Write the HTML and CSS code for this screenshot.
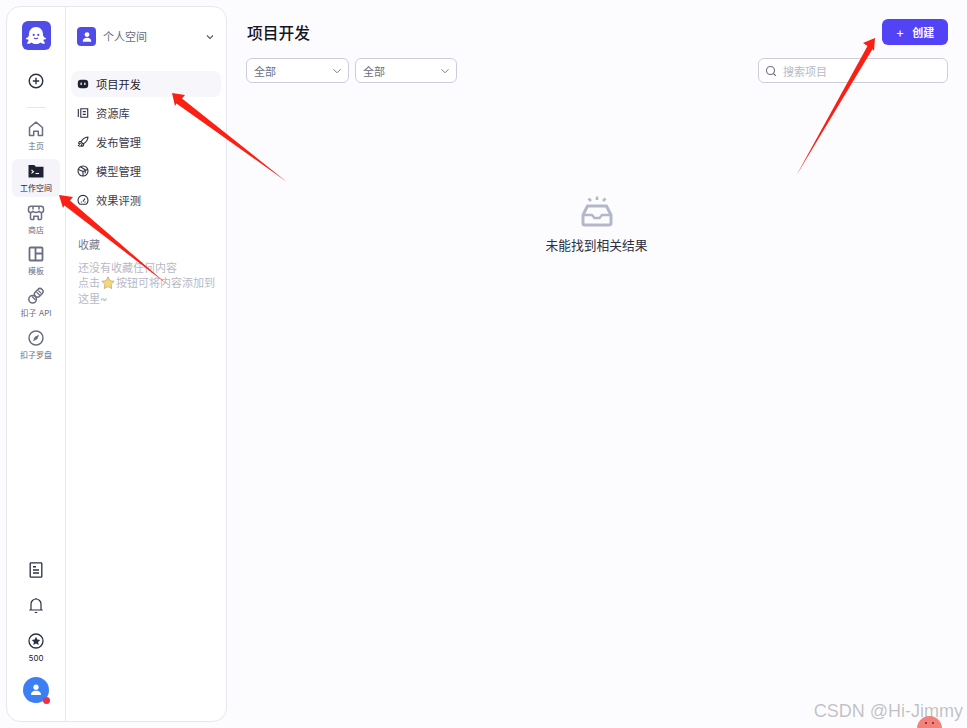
FILE: index.html
```html
<!DOCTYPE html>
<html lang="zh-CN">
<head>
    <meta charset="UTF-8">
    <meta name="viewport" content="width=device-width, initial-scale=1.0">
    <title>项目开发</title>
    <link rel="stylesheet" href="styles.css">
</head>
<body>
    <div class="app">
        <aside class="panel">
            <div class="rail">
                <div class="logo">
                    <svg width="22" height="20" viewBox="0 0 21 18" preserveAspectRatio="none"><path d="M10.500 1C6.300 1 3.800 4 3.800 7.800c0 1.300-.9 2.300-2.500 3-.6.300-.5 1 .2 1.100.8.100 1.400.2 2 .5-.1 1-.6 1.900-1.300 2.500-.5.400-.2 1.100.5 1.100 1.400 0 2.700-.4 3.600-1.200 1.100.9 2.600 1.500 4.200 1.500s3.100-.6 4.200-1.500c.9.800 2.200 1.200 3.600 1.200.7 0 1-.7.500-1.100-.7-.6-1.200-1.500-1.300-2.500.6-.3 1.200-.4 2-.5.700-.1.800-.8.200-1.100-1.600-.7-2.500-1.700-2.500-3C17.200 4 14.700 1 10.500 1z" fill="#fff"/><circle cx="8.300" cy="8" r="1" fill="#4f4ce8"/><circle cx="12.700" cy="8" r="1" fill="#4f4ce8"/><path d="M8.600 10.600c1 1 2.800 1 3.800 0" fill="none" stroke="#4f4ce8" stroke-width="1"/></svg>
                </div>
                <div class="rail-add">
                    <svg width="18" height="18" viewBox="0 0 18 18" fill="none" stroke="#2b2f42" stroke-width="1.400"><circle cx="9" cy="9" r="6.800"/><path d="M9 5.800v6.400M5.800 9h6.400"/></svg>
                </div>
                <div class="rail-divider"></div>
                <div class="rail-item">
                    <svg width="18" height="18" viewBox="0 0 18 18" fill="none" stroke="#6b6e82" stroke-width="1.500" stroke-linejoin="round"><path d="M2.500 7.500 9 2.200l6.500 5.300v8h-4.200v-4.200H6.700v4.200H2.500z"/></svg>
                    <span>主页</span>
                </div>
                <div class="rail-item rail-item-active">
                    <svg width="18" height="18" viewBox="0 0 18 18"><path d="M1.500 3h5.800l1.500 1.700h7.700v10.800h-15z" fill="#1f2233"/><path d="m4.500 8 2 1.700-2 1.700" fill="none" stroke="#fff" stroke-width="1.100"/><path d="M8.500 11.500h3.500" stroke="#fff" stroke-width="1.100"/></svg>
                    <span>工作空间</span>
                </div>
                <div class="rail-item">
                    <svg width="18" height="18" viewBox="0 0 18 18" fill="none" stroke="#6b6e82" stroke-width="1.500" stroke-linejoin="round"><path d="M4 2.200h10c1.500 0 2.500 1 2.500 2.500V6.500c0 1.200-1 2-2.100 2-1 0-1.700-.5-2.200-1.200-.7.800-1.800 1.200-3.200 1.200s-2.500-.4-3.200-1.200c-.5.700-1.200 1.200-2.200 1.200-1.100 0-2.100-.8-2.100-2V4.700c0-1.500 1-2.500 2.500-2.500z"/><path d="M3.500 9v5.500c0 .6.400 1 1 1h2.300v-3.300h4.400v3.300h2.300c.6 0 1-.4 1-1V9M6 2.500v3M12 2.500v3"/></svg>
                    <span>商店</span>
                </div>
                <div class="rail-item">
                    <svg width="18" height="18" viewBox="0 0 18 18" fill="none" stroke="#6b6e82" stroke-width="1.800"><rect x="2.500" y="2.500" width="13" height="13" rx="1"/><path d="M8.500 2.500v13M8.500 8.500h7"/></svg>
                    <span>模板</span>
                </div>
                <div class="rail-item">
                    <svg width="18" height="18" viewBox="0 0 18 18" fill="none" stroke="#6b6e82" stroke-width="1.500"><circle cx="5.600" cy="12.200" r="3.800"/><rect x="7" y="2.800" width="9.500" height="6" rx="3" transform="rotate(-45 11.750 5.800)"/><path d="m9.500 5 3.500 3.500M11.300 3.500l3.200 3.200M5 9.500l3.500 3.500" stroke-width="1.100"/></svg>
                    <span>扣子 API</span>
                </div>
                <div class="rail-item">
                    <svg width="18" height="18" viewBox="0 0 18 18" fill="none" stroke="#6b6e82" stroke-width="1.500"><circle cx="9" cy="9" r="7"/><path d="m12.200 5.800-4.400 2-2 4.400 4.400-2z" fill="#6b6e82" stroke="none"/></svg>
                    <span>扣子罗盘</span>
                </div>
                <div class="rail-bottom">
                    <svg width="18" height="18" viewBox="0 0 18 18" fill="none" stroke="#2b2f42" stroke-width="1.300"><rect x="3.200" y="1.800" width="11.600" height="14.400" rx=".8"/><path d="M6 5.800h3M6 9h6M6 12h6" stroke-width="1.400"/></svg>
                    <svg class="rail-bell" width="18" height="18" viewBox="0 0 18 18" fill="none" stroke="#2b2f42" stroke-width="1.200"><path d="M2.300 14h13.400M4 14V8a5 5 0 0 1 10 0v6M9 2v1M7.800 16.500h2.400"/></svg>
                    <svg class="rail-star" width="18" height="18" viewBox="0 0 18 18"><circle cx="9" cy="9" r="7" fill="none" stroke="#2b2f42" stroke-width="1.300"/><path d="m9 4.800 1.300 2.800 3 .4-2.200 2.100.6 3L9 11.600l-2.700 1.500.6-3L4.700 8l3-.4z" fill="#2b2f42"/></svg>
                    <span class="rail-points">500</span>
                    <div class="avatar">
                        <svg width="14" height="14" viewBox="0 0 14 14" fill="#fff"><circle cx="7" cy="4.200" r="2.600"/><path d="M2 12c0-3 2.200-4.200 5-4.200S12 9 12 12z"/></svg>
                        <span class="avatar-badge"></span>
                    </div>
                </div>
            </div>
            <nav class="nav">
                <div class="space">
                    <span class="space-icon">
                        <svg width="12" height="12" viewBox="0 0 14 14" fill="#fff"><circle cx="7" cy="4.200" r="2.800"/><path d="M2 12.500c0-3.200 2.200-4.500 5-4.500s5 1.300 5 4.500z"/></svg>
                    </span>
                    <span class="space-name">个人空间</span>
                    <svg class="space-caret" width="10" height="10" viewBox="0 0 10 10" fill="none" stroke="#55586a" stroke-width="1.100"><path d="m2 3.500 3 3 3-3"/></svg>
                </div>
                <ul class="menu">
                    <li class="menu-item menu-item-active">
                        <svg width="12" height="12" viewBox="0 0 12 12"><rect x=".8" y="1.800" width="10.400" height="8.400" rx="3.200" fill="#1f2233"/><rect x="3.500" y="4.500" width="1.300" height="2.600" rx=".6" fill="#fff"/><rect x="7.200" y="4.500" width="1.300" height="2.600" rx=".6" fill="#fff"/></svg>
                        <span>项目开发</span>
                    </li>
                    <li class="menu-item">
                        <svg width="12" height="12" viewBox="0 0 12 12" fill="none" stroke="#2b2f42" stroke-width="1.100"><path d="M1.300 2v8M3.800 1.800h6.900v8.400H3.800zM5.800 4.600h3M5.800 7.400h3"/></svg>
                        <span>资源库</span>
                    </li>
                    <li class="menu-item">
                        <svg width="12" height="12" viewBox="0 0 12 12" fill="none" stroke="#2b2f42" stroke-width="1.100" stroke-linejoin="round"><path d="M11 1C7.800 1.200 5.500 3 4 6l2 2c3-1.500 4.800-3.800 5-7zM4.300 5.300 2.500 5.500 1.500 7.300l2.300.2M6.700 7.700 6.500 9.500l-1.800 1-.2-2.300M2.800 8.300 1 10M3.800 9.500 2.500 11" /></svg>
                        <span>发布管理</span>
                    </li>
                    <li class="menu-item">
                        <svg width="12" height="12" viewBox="0 0 12 12" fill="none" stroke="#2b2f42" stroke-width="1.100" stroke-linejoin="round"><circle cx="6" cy="6" r="5"/><path d="M1.500 4.500 6 6.500l4.500-2M6 6.500V11M3.500 1.800 8.200 4.800v3.500"/></svg>
                        <span>模型管理</span>
                    </li>
                    <li class="menu-item">
                        <svg width="12" height="12" viewBox="0 0 12 12" fill="none" stroke="#2b2f42" stroke-width="1.100"><path d="M2.800 10.200a5 5 0 1 1 6.400 0z"/><path d="M6 7.500 8 4.500M3.800 8h1M7.500 8h1"/></svg>
                        <span>效果评测</span>
                    </li>
                </ul>
                <div class="saved">
                    <div class="saved-title">收藏</div>
                    <p class="saved-text"><span>还没有收藏任何内容</span><br><span>点击</span><svg class="saved-star" width="14" height="13" viewBox="0 0 14 13"><path d="m7 .8 1.900 3.900 4.300.6-3.100 3 .7 4.300L7 10.600l-3.800 2 .7-4.300-3.100-3 4.300-.6z" fill="#f5d77c" stroke="#b9a56a" stroke-width=".7"/></svg><span>按钮可将内容添加到</span><br><span>这里~</span></p>
                </div>
            </nav>
        </aside>
        <main class="main">
            <div class="main-head">
                <h1>项目开发</h1>
                <button class="create-btn"><span class="create-plus">+</span>创建</button>
            </div>
            <div class="toolbar">
                <div class="select select-first">
                    <span>全部</span>
                    <svg width="10" height="10" viewBox="0 0 10 10" fill="none" stroke="#7b7e90" stroke-width="1"><path d="m1.500 3.300 3.500 3.500 3.500-3.500"/></svg>
                </div>
                <div class="select">
                    <span>全部</span>
                    <svg width="10" height="10" viewBox="0 0 10 10" fill="none" stroke="#7b7e90" stroke-width="1"><path d="m1.500 3.300 3.500 3.500 3.500-3.500"/></svg>
                </div>
                <div class="search">
                    <svg width="12" height="12" viewBox="0 0 12 12" fill="none" stroke="#6b6e82" stroke-width="1.100"><circle cx="5.500" cy="5.500" r="4"/><path d="m8.500 8.500 2.300 2.300"/></svg>
                    <span>搜索项目</span>
                </div>
            </div>
            <div class="empty">
                <svg width="34" height="32" viewBox="0 0 34 32" fill="none" stroke="#b4b7c9"><path d="M3 20 7.500 11h19L31 20v8.500a1.500 1.500 0 0 1-1.500 1.500h-25A1.500 1.500 0 0 1 3 28.500z" stroke-width="3" stroke-linejoin="round"/><path d="M4 20h8l2.500 3h5L22 20h8" stroke-width="2.500"/><path d="M17 1.500v3.500M8.500 3.500l2.500 2.500M25.500 3.500 23 6" stroke-width="2.500"/></svg>
                <p>未能找到相关结果</p>
            </div>
        </main>
    </div>

    <!-- 标注箭头 -->
    <svg class="arrows" width="967" height="728" viewBox="0 0 967 728" fill="#fb1f14">
        <polygon points="172,93 185,95 182,98.500 287,182 176.500,103.500 175,106"/>
        <polygon points="59,195 73,197 70,200.500 168,285 64.500,205.500 63,208"/>
        <polygon points="875,38 863,43 867.500,46 796,176 872.500,49 874,51"/>
    </svg>

    <div class="blob"><i></i><i></i></div>
    <div class="watermark">CSDN @Hi-Jimmy</div>
</body>
</html>
```

FILE: styles.css
```css
* {
    box-sizing: border-box;
}
html, body {
    margin: 0;
    height: 728px;
    overflow: hidden;
}
body {
    position: relative;
    font-family: Inter, 'Noto Sans CJK SC', sans-serif;
    background-color: #fcfcff;
    color: #1f2233;
}
.app {
    display: flex;
    height: 728px;
    padding: 6px 0 6px 6px;
}
.panel {
    display: flex;
    width: 221px;
    height: 716px;
    background-color: #fff;
    border: 1px solid #e6e7f1;
    border-radius: 14px;
}
.rail {
    display: flex;
    flex-direction: column;
    align-items: center;
    width: 59px;
    padding: 14px 0 18px;
    border-right: 1px solid #e9eaf1;
}
.logo {
    display: flex;
    align-items: center;
    justify-content: center;
    width: 29px;
    height: 29px;
    background-color: #4f4ce8;
    border-radius: 6px;
}
.rail-add {
    height: 18px;
    margin-top: 22px;
}
.rail-divider {
    width: 19px;
    height: 1px;
    margin: 17px 0 9px;
    background-color: #e6e7ee;
}
.rail-item {
    display: flex;
    flex-direction: column;
    align-items: center;
    flex-shrink: 0;
    width: 48px;
    height: 38px;
    margin-bottom: 3.750px;
    padding-top: 3px;
    border-radius: 6px;
    font-size: 8px;
    line-height: 10px;
    color: #6b6e82;
}
.rail-item span {
    margin-top: 3px;
}
.rail-item-active {
    background-color: #f4f4fa;
    color: #1f2233;
}
.rail-bottom {
    display: flex;
    flex-direction: column;
    align-items: center;
    margin-top: auto;
}
.rail-bell {
    margin-top: 17px;
}
.rail-star {
    margin-top: 18px;
}
.rail-points {
    margin-top: 3px;
    font-size: 8px;
    line-height: 10px;
}
.avatar {
    position: relative;
    display: flex;
    align-items: center;
    justify-content: center;
    width: 26px;
    height: 26px;
    margin-top: 14px;
    background-color: #3c7ff5;
    border-radius: 50%;
}
.avatar-badge {
    position: absolute;
    right: -1px;
    bottom: -1px;
    width: 7px;
    height: 7px;
    background-color: #ee2f45;
    border-radius: 50%;
}
.nav {
    flex: 1;
    padding: 0 5px;
}
.space {
    display: flex;
    align-items: center;
    height: 19px;
    margin: 20px 0 25px 6px;
}
.space-icon {
    display: flex;
    align-items: center;
    justify-content: center;
    width: 19px;
    height: 19px;
    background-color: #4f4ce8;
    border-radius: 4px;
}
.space-name {
    margin: 0 0 2px 7px;
    font-size: 11px;
    color: #666a7c;
}
.space-caret {
    margin-left: auto;
    margin-right: 6px;
}
.menu {
    display: flex;
    flex-direction: column;
    gap: 3px;
    margin: 0;
    padding: 0;
    list-style: none;
}
.menu-item {
    display: flex;
    align-items: center;
    gap: 7px;
    height: 26px;
    padding-left: 6px;
    border-radius: 8px;
    font-size: 11.250px;
    color: #3a3d4f;
}
.menu-item-active {
    background-color: #f6f6fb;
    color: #1f2233;
}
.saved {
    margin-top: 25px;
    padding-left: 7px;
    font-size: 11px;
    line-height: 15.500px;
}
.saved-title {
    color: #777a8a;
}
.saved-text {
    margin: 7px 0 0;
    color: #b7b9c6;
}
.saved-star {
    margin: 0 1px;
    vertical-align: -2px;
}
.main {
    flex: 1;
    padding: 13px 19px 0 20px;
}
.main-head {
    display: flex;
    align-items: center;
    justify-content: space-between;
    height: 26px;
}
h1 {
    margin: 0;
    font-size: 15.750px;
    font-weight: 500;
    color: #14161f;
}
.create-btn {
    display: flex;
    align-items: center;
    justify-content: center;
    width: 66px;
    height: 26px;
    background-color: #5243f6;
    color: #fff;
    border: none;
    border-radius: 6px;
    font-family: inherit;
    font-size: 11px;
    font-weight: 600;
}
.create-plus {
    margin-right: 8px;
    font-size: 13px;
    font-weight: 400;
}
.toolbar {
    display: flex;
    gap: 6px;
    margin: 13px 0 0 -1px;
}
.select, .search {
    display: flex;
    align-items: center;
    height: 25px;
    background-color: #fff;
    border: 1px solid #ccceE0;
    border-radius: 6px;
    font-size: 11px;
}
.select {
    justify-content: space-between;
    width: 102px;
    padding: 0 6px 0 7px;
    color: #6b6e82;
}
.select-first {
    width: 103px;
}
.search {
    gap: 6px;
    width: 190px;
    margin-left: auto;
    padding-left: 6px;
    color: #b7b9c6;
}
.empty {
    display: flex;
    flex-direction: column;
    align-items: center;
    margin: 112px 2px 0 0;
}
.empty p {
    margin: 8px 0 0;
    font-size: 12.750px;
    color: #2b2f42;
}
.arrows {
    position: absolute;
    left: 0;
    top: 0;
}
.watermark {
    position: absolute;
    right: 4px;
    top: 700px;
    font-family: 'Liberation Sans', sans-serif;
    font-size: 18px;
    line-height: 22px;
    color: rgba(120, 120, 120, .45);
}
.blob {
    position: absolute;
    left: 917px;
    top: 716px;
    width: 25px;
    height: 25px;
    background-color: #f5827a;
    border-radius: 50%;
}
.blob i {
    position: absolute;
    top: 6px;
    left: 8px;
    width: 2px;
    height: 2px;
    background-color: #5a2a28;
    border-radius: 50%;
}
.blob i + i {
    left: 15px;
}
```
